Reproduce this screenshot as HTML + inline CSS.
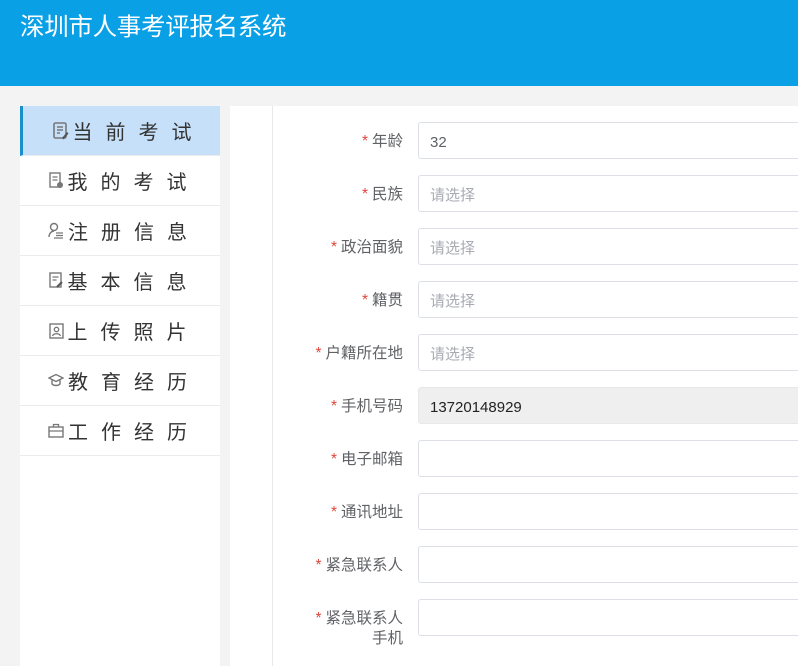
<!DOCTYPE html>
<html><head><meta charset="utf-8"><style>
*{margin:0;padding:0;box-sizing:border-box}
body{width:798px;height:651px;overflow:hidden;background:#f3f3f3;font-family:"Liberation Sans","Noto Sans CJK SC",sans-serif;position:relative}
.hd{position:absolute;left:0;top:0;width:798px;height:86px;background:#0aa0e6}
.hd h1{position:absolute;left:20px;top:8px;font-size:24.5px;font-weight:normal;color:#fff;letter-spacing:-0.3px}
.sb{position:absolute;left:20px;top:106px;width:200px;height:560px;background:#fff}
.it{height:50px;border-bottom:1px solid #ebebeb;display:flex;align-items:center;justify-content:center;font-size:20px;color:#333;letter-spacing:13px;padding-left:8px}
.it.a{background:#c6e0fa;border-left:3px solid #1a8fc9;padding-left:14px}
.it svg{margin-right:4px;flex:none}
.pn{position:absolute;left:230px;top:106px;width:600px;height:560px;background:#fff}
.vl{position:absolute;left:272px;top:106px;width:1px;height:560px;background:#e8e8e8}
.lb{position:absolute;right:395px;width:120px;text-align:right;font-size:15.5px;color:#606266;line-height:18px}
.lb i{font-style:normal;color:#e0463c;margin-right:4px}
.in{position:absolute;left:418px;width:400px;height:37px;border:1px solid #dcdfe6;border-radius:3px;font-size:15px;color:#606266;padding-left:11px;line-height:39px}
.ph{color:#a8abb2}
.dis{background:#efefef;color:#222}
</style></head><body>
<div class="hd"><h1>深圳市人事考评报名系统</h1></div>
<div class="sb">
<div class="it a"><svg width="16" height="18" viewBox="0 0 16 18"><rect x="1" y="1" width="12" height="15" rx="1.5" fill="none" stroke="#777" stroke-width="1.6"/><path d="M4 5h6M4 8h6M4 11h3" stroke="#777" stroke-width="1.4"/><path d="M9 16l5-6 1.5 1.5-5 6z" fill="#555"/></svg>当前考试</div>
<div class="it"><svg width="15" height="17" viewBox="0 0 15 17"><rect x="1" y="1" width="10" height="14" fill="none" stroke="#777" stroke-width="1.4"/><path d="M3.5 5h5M3.5 8h5" stroke="#777" stroke-width="1.3"/><circle cx="11" cy="13" r="3" fill="#777"/></svg>我的考试</div>
<div class="it"><svg width="16" height="17" viewBox="0 0 16 17"><circle cx="6" cy="5" r="3.5" fill="none" stroke="#777" stroke-width="1.4"/><path d="M1 15c0-4 3-6 5-6" fill="none" stroke="#777" stroke-width="1.4"/><path d="M8 11h7M8 13.5h7M6 16h9" stroke="#777" stroke-width="1.3"/></svg>注册信息</div>
<div class="it"><svg width="15" height="17" viewBox="0 0 15 17"><rect x="1" y="1" width="11" height="14" fill="none" stroke="#777" stroke-width="1.4"/><path d="M3.5 5h6M3.5 8h4" stroke="#777" stroke-width="1.3"/><path d="M8 15l5-5" stroke="#555" stroke-width="2"/></svg>基本信息</div>
<div class="it"><svg width="15" height="16" viewBox="0 0 15 16"><rect x="1" y="1" width="13" height="14" fill="none" stroke="#777" stroke-width="1.4"/><circle cx="7.5" cy="6.5" r="2.2" fill="none" stroke="#777" stroke-width="1.3"/><path d="M3.5 13c1-3 7-3 8 0" fill="none" stroke="#777" stroke-width="1.3"/></svg>上传照片</div>
<div class="it"><svg width="16" height="15" viewBox="0 0 16 15"><path d="M1 5l7-3.5 7 3.5-7 3.5z" fill="none" stroke="#777" stroke-width="1.4"/><path d="M4 7v4c2 2 6 2 8 0V7" fill="none" stroke="#777" stroke-width="1.4"/></svg>教育经历</div>
<div class="it"><svg width="16" height="15" viewBox="0 0 16 15"><rect x="1" y="4" width="14" height="10" fill="none" stroke="#777" stroke-width="1.4"/><path d="M5.5 4V1.5h5V4M1 8h14" fill="none" stroke="#777" stroke-width="1.3"/></svg>工作经历</div>
</div>
<div class="pn"></div><div class="vl"></div>
<div class="lb" style="top:133px"><i>*</i>年龄</div><div class="in" style="top:122px">32</div>
<div class="lb" style="top:186px"><i>*</i>民族</div><div class="in ph" style="top:175px">请选择</div>
<div class="lb" style="top:239px"><i>*</i>政治面貌</div><div class="in ph" style="top:228px">请选择</div>
<div class="lb" style="top:292px"><i>*</i>籍贯</div><div class="in ph" style="top:281px">请选择</div>
<div class="lb" style="top:345px"><i>*</i>户籍所在地</div><div class="in ph" style="top:334px">请选择</div>
<div class="lb" style="top:398px"><i>*</i>手机号码</div><div class="in dis" style="top:387px;border-color:#e8e8e8">13720148929</div>
<div class="lb" style="top:451px"><i>*</i>电子邮箱</div><div class="in" style="top:440px"></div>
<div class="lb" style="top:504px"><i>*</i>通讯地址</div><div class="in" style="top:493px"></div>
<div class="lb" style="top:557px"><i>*</i>紧急联系人</div><div class="in" style="top:546px"></div>
<div class="lb" style="top:609px;line-height:20px"><i>*</i>紧急联系人<br>手机</div><div class="in" style="top:599px"></div>
</body></html>
